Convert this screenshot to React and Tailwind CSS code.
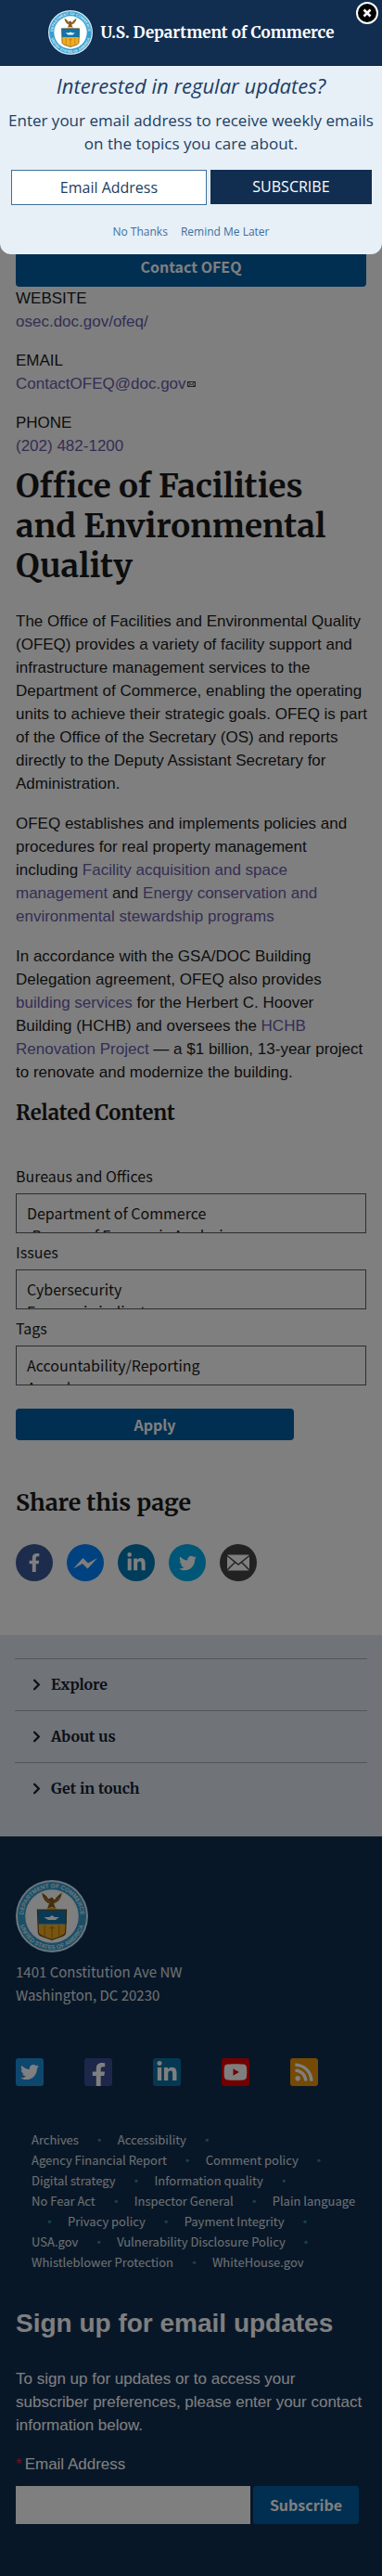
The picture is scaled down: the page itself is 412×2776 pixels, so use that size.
import React from "react";
import { FaFacebookF, FaLinkedinIn, FaTwitter, FaYoutube, FaRss } from "react-icons/fa";
import { ChevronRight } from "lucide-react";

const sourceSans = "font-['Source_Sans_Pro','Noto_Sans_CJK_SC',sans-serif]";
const merri = "font-['Merriweather','Noto_Serif','DejaVu_Serif',serif]";
const link = "text-[#6a5caa]";

function Seal({ className }) {
  return (
    <svg viewBox="0 0 80 80" className={className} role="img" aria-label="Department of Commerce seal">
      <defs>
        <path id="ringTop" d="M8.5 40a31.5 31.5 0 0 1 63 0" />
        <path id="ringBottom" d="M3.5 40a36.5 36.5 0 0 0 73 0" />
      </defs>
      <circle cx="40" cy="40" r="40" fill="#d9edf7" />
      <circle cx="40" cy="40" r="38" fill="#369fcf" />
      <circle cx="40" cy="40" r="29.500" fill="#fff" />
      <g fill="#d9edf7" fontSize="6.5" fontWeight="700" fontFamily="Liberation Sans" textAnchor="middle">
        <text><textPath href="#ringTop" startOffset="50%">DEPARTMENT OF COMMERCE</textPath></text>
        <text><textPath href="#ringBottom" startOffset="50%">UNITED STATES OF AMERICA</textPath></text>
      </g>
      <path d="M29 14c1 7 4 10 8 12l-2 5 5-1 4 1-2-5c5-2 8-5 9-12-3 2-6 4-8 8l-3-3-4 2c-1-3-4-5-7-7z" fill="#8a5a1c" />
      <path d="M32 19c2 3 4 5 7 6m9-6c-1 3-3 5-6 6" fill="none" stroke="#c08a3c" strokeWidth="1" />
      <path d="M35 31.500h10" stroke="#e8a51c" strokeWidth="1.5" />
      <path d="M24 33h32v16H25z" fill="#1473a8" />
      <path d="M25 49h30v9c0 4-7 5-15 8-8-3-15-4-15-8z" fill="#f2ac1e" />
      <path d="M24 33h32l-1 25c0 4-7 5-15 8-8-3-15-4-15-8z" fill="none" stroke="#5b4a1e" strokeWidth="1.200" />
      <path d="M31 41h6l3-2 3 2h5l-4 3h-8z" fill="#fff" />
      <path d="M40 50v14M37 53h6M32 50v12M48 50v12" stroke="#a8701c" strokeWidth="1" />
    </svg>
  );
}

function Messenger() {
  return (
    <svg viewBox="0 0 40 40" className="size-full" aria-hidden="true">
      <path d="M7 26.500 17.500 15l5.500 5.500L33 15 22.500 26.500 17 21z" fill="#fff" />
    </svg>
  );
}

function Mail() {
  return (
    <svg viewBox="0 0 40 40" className="size-full" aria-hidden="true">
      <rect x="8" y="11.500" width="24" height="17" rx="1" fill="#fff" />
      <path d="m8 12.500 12 9.500 12-9.500M8 28l8.500-8.500M32 28l-8.500-8.500" fill="none" stroke="#444" strokeWidth="1.500" />
    </svg>
  );
}

function Contact({ label, children }) {
  return (
    <div className="mb-[17px]">
      <dt>{label}</dt>
      <dd>{children}</dd>
    </div>
  );
}

function Filter({ id, label, options }) {
  return (
    <div className="flex flex-col">
      <label htmlFor={id} className="h-[35px] pt-[2px] leading-[28px]">{label}</label>
      <select id={id} multiple className="mb-1 h-[43px] w-full overflow-hidden border border-[#565c65] bg-white px-[11px] py-[8px] [scrollbar-width:none]">
        {options.map((o) => (
          <option key={o} className="min-h-0 p-0 leading-[24px]">{o}</option>
        ))}
      </select>
    </div>
  );
}

const share = [
  ["Facebook", "bg-[#3b5998]", <FaFacebookF className="size-[20px]" />],
  ["Messenger", "bg-[#0084ff]", <Messenger />],
  ["LinkedIn", "bg-[#007bb5]", <FaLinkedinIn className="size-[22px]" />],
  ["Twitter", "bg-[#00aced]", <FaTwitter className="size-[19px]" />],
  ["Email", "bg-[#444]", <Mail />],
];

const social = [
  ["Twitter", "bg-[#1d8fdb] items-center", <FaTwitter className="size-[20px]" />],
  ["Facebook", "bg-[#3b4f93] items-end", <FaFacebookF className="size-[25px]" />],
  ["LinkedIn", "bg-[#0a73a5] items-center", <FaLinkedinIn className="size-[24px]" />],
  ["YouTube", "bg-[#e60000] items-center", <FaYoutube className="size-[26px]" />],
  ["RSS", "bg-[#e8940a] items-center", <FaRss className="size-[22px]" />],
];

const policies = [
  "Archives", "Accessibility", "Agency Financial Report", "Comment policy", "Digital strategy",
  "Information quality", "No Fear Act", "Inspector General", "Plain language", "Privacy policy",
  "Payment Integrity", "USA.gov", "Vulnerability Disclosure Policy", "Whistleblower Protection", "WhiteHouse.gov",
];

function Modal() {
  return (
    <section role="dialog" aria-label="Email updates" className="absolute inset-x-0 top-0 overflow-hidden rounded-b-xl bg-[#e7eff7] pb-[13px] text-center font-['Open_Sans','Noto_Sans',sans-serif] text-[#1c3e63]">
      <div className="flex h-[71px] items-center justify-center gap-[9px] border-b border-[#0b2140] bg-[#112e51]">
        <Seal className="size-[48px]" />
        <span className={`${merri} text-[17px] font-bold text-white`}>U.S. Department of Commerce</span>
      </div>
      <button aria-label="Close" className="absolute top-[2px] right-[4px] flex size-[24px] items-center justify-center rounded-full border-2 border-white bg-black text-white">
        <svg viewBox="0 0 12 12" className="size-[12px]"><path d="m2.500 2.500 7 7m0-7-7 7" stroke="currentColor" strokeWidth="2.600" /></svg>
      </button>
      <h2 className="mt-[5px] text-[22px] leading-[32px] italic">Interested in regular updates?</h2>
      <p className="mt-[9px] px-1 text-[17px] leading-[25px]">Enter your email address to receive weekly emails on the topics you care about.</p>
      <div className="mt-[16px] flex gap-[4px] px-[12px] pr-[11px]">
        <input aria-label="Email Address" placeholder="Email Address" className="h-[38px] min-w-0 flex-[6] border border-[#3f7099] bg-white text-center text-[16px] placeholder:text-[#1c3e63]" />
        <button className="h-[37px] flex-[5] bg-[#112e51] text-[16px] text-white">SUBSCRIBE</button>
      </div>
      <div className="mt-[18px] flex justify-center gap-[14px] text-[12px] leading-[22px] text-[#3a6f9f]">
        <a href="#no">No Thanks</a>
        <a href="#later">Remind Me Later</a>
      </div>
    </section>
  );
}

export default function App() {
  return (
    <div className="relative bg-white font-['Liberation_Sans',sans-serif] text-[17px] leading-[25px] text-[#1b1b1b]">
      <main className="px-[17px] pt-[265px]">
        <button className={`${sourceSans} block h-[44px] w-full rounded-[4px] bg-[#005ea2] text-[16px] font-bold text-white`}>Contact OFEQ</button>
        <dl>
          <Contact label="WEBSITE"><a href="#site" className={link}>osec.doc.gov/ofeq/</a></Contact>
          <Contact label="EMAIL">
            <a href="#mail" className={`${link} inline-flex items-center`}>ContactOFEQ@doc.gov
              <svg viewBox="0 0 18 12" className="ml-px h-[6px] w-[9px]" aria-hidden="true"><path d="M1 1h16v10H1zM1 1l8 6 8-6M1 11l6-5M17 11l-6-5" fill="none" stroke="#333" strokeWidth="1.800" /></svg>
            </a>
          </Contact>
          <Contact label="PHONE"><a href="#phone" className={link}>(202) 482-1200</a></Contact>
        </dl>
        <h1 className={`${merri} -mt-[7px] text-[35px] leading-[43px] font-bold`}>Office of Facilities and Environmental Quality</h1>
        <div className="mt-[25px] -mr-[4px] flex flex-col gap-[18px]">
          <p>The Office of Facilities and Environmental Quality (OFEQ) provides a variety of facility support and infrastructure management services to the Department of Commerce, enabling the operating units to achieve their strategic goals. OFEQ is part of the Office of the Secretary (OS) and reports directly to the Deputy Assistant Secretary for Administration.</p>
          <p>OFEQ establishes and implements policies and procedures for real property management including <a href="#a" className={link}>Facility acquisition and space management</a> and <a href="#b" className={link}>Energy conservation and environmental stewardship programs</a></p>
          <p>In accordance with the GSA/DOC Building Delegation agreement, OFEQ also provides <a href="#c" className={link}>building services</a> for the Herbert C. Hoover Building (HCHB) and oversees the <a href="#d" className={link}>HCHB Renovation Project</a> — a $1 billion, 13-year project to renovate and modernize the building.</p>
        </div>
        <h2 className={`${merri} mt-[16px] text-[22px] leading-[30px] font-bold`}>Related Content</h2>
        <form className={`${sourceSans} mt-[37px] text-[16px]`} onSubmit={(e) => e.preventDefault()}>
          <Filter id="bureaus" label="Bureaus and Offices" options={["Department of Commerce", "-Bureau of Economic Analysis"]} />
          <Filter id="issues" label="Issues" options={["Cybersecurity", "Economic indicators"]} />
          <Filter id="tags" label="Tags" options={["Accountability/Reporting", "Awards"]} />
          <button className="mt-[21px] block h-[34px] w-[300px] rounded-[4px] bg-[#005ea2] font-bold text-white">Apply</button>
        </form>
        <h2 className={`${merri} mt-[50px] text-[25px] leading-[34px] font-bold`}>Share this page</h2>
        <div className="mt-[28px] flex gap-[15px] pb-[58px]">
          {share.map(([name, color, icon]) => (
            <a key={name} href="#share" aria-label={name} className={`flex size-[40px] items-center justify-center rounded-full text-white ${color}`}>{icon}</a>
          ))}
        </div>
      </main>
      <nav className="bg-[#e1e7f1] px-[16px] pt-[25px] pb-[24px]">
        {["Explore", "About us", "Get in touch"].map((t) => (
          <button key={t} className={`${merri} flex h-[56px] w-full items-center gap-[6px] border-t border-[#a9aeb1] pl-[14px] text-[16px] font-bold text-[#14202e]`}>
            <ChevronRight className="size-[19px]" strokeWidth={3} />
            {t}
          </button>
        ))}
      </nav>
      <footer className="bg-[#112e51] px-[17px] pt-[47px] pb-[56px] text-white">
        <Seal className="size-[78px]" />
        <div className={sourceSans}>
          <address className="mt-[8px] text-[15px] text-[#dfe1e2] not-italic">1401 Constitution Ave NW<br />Washington, DC 20230</address>
          <div className="mt-[56px] flex gap-[44px]">
            {social.map(([name, color, icon]) => (
              <a key={name} href="#social" aria-label={name} className={`flex size-[30px] justify-center overflow-hidden rounded-[3px] text-white ${color}`}>{icon}</a>
            ))}
          </div>
          <div className="mt-[47px] pr-[11px] pl-[17px] text-[13px] leading-[22px] text-[#dfe1e2]">
            {policies.map((t, i) => (
              <React.Fragment key={t}>
                <a href="#policy" className="whitespace-nowrap">{t}</a>{" "}
                {i < policies.length - 1 && <span className="inline-block w-[39px] text-center font-bold text-[#2e8b8b]">·</span>}
              </React.Fragment>
            ))}
          </div>
        </div>
        <form onSubmit={(e) => e.preventDefault()}>
          <h2 className="mt-[35px] text-[28px] leading-[40px] font-bold">Sign up for email updates</h2>
          <p className="mt-[27px]">To sign up for updates or to access your subscriber preferences, please enter your contact information below.</p>
          <label htmlFor="email" className="mt-[17px] block"><span className="mr-[3px] text-[#e31c3d]">*</span>Email Address</label>
          <div className="mt-[11px] flex gap-[3px] pr-[8px]">
            <input id="email" className="h-[41px] min-w-0 flex-1 bg-white px-2 text-black" />
            <button className={`${sourceSans} h-[41px] w-[114px] rounded-[3px] bg-[#005ea2] text-[16px] font-bold`}>Subscribe</button>
          </div>
        </form>
      </footer>
      <div className="absolute inset-0 bg-black/50" />
      <Modal />
    </div>
  );
}
